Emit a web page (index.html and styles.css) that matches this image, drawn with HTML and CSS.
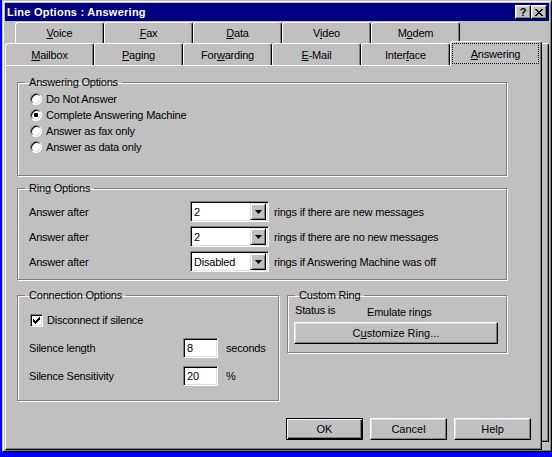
FILE: index.html
```html
<!DOCTYPE html>
<html lang="en">
<head>
    <meta charset="UTF-8">
    <title>Line Options : Answering</title>
    <link rel="stylesheet" href="styles.css">
</head>
<body>
    <div class="window">
        <div class="titlebar">
            <span class="title">Line Options : Answering</span>
            <div class="caption-buttons">
                <span class="caption-btn">?</span>
                <span class="caption-btn">
                    <svg width="8" height="7" viewBox="0 0 8 7" shape-rendering="crispEdges"><path d="M0 0h2v1h-2zM6 0h2v1h-2zM1 1h2v1h-2zM5 1h2v1h-2zM2 2h4v1h-4zM3 3h2v1h-2zM2 4h4v1h-4zM1 5h2v1h-2zM5 5h2v1h-2zM0 6h2v1h-2zM6 6h2v1h-2z"/></svg>
                </span>
            </div>
        </div>

        <div class="content">
            <div class="notebook">
                <div class="tab-row back">
                    <div class="tab"><span><u>V</u>oice</span></div>
                    <div class="tab"><span><u>F</u>ax</span></div>
                    <div class="tab"><span><u>D</u>ata</span></div>
                    <div class="tab"><span>V<u>i</u>deo</span></div>
                    <div class="tab"><span>M<u>o</u>dem</span></div>
                </div>
                <div class="tab-row front">
                    <div class="tab"><span><u>M</u>ailbox</span></div>
                    <div class="tab"><span><u>P</u>aging</span></div>
                    <div class="tab"><span>For<u>w</u>arding</span></div>
                    <div class="tab"><span><u>E</u>-Mail</span></div>
                    <div class="tab"><span>Inter<u>f</u>ace</span></div>
                    <div class="tab selected"><span class="focus"><u>A</u>nswering</span></div>
                </div>

                <div class="panel">
                    <fieldset class="group wide answering">
                        <legend>Answering Options</legend>
                        <div class="group-body">
                            <div class="radio-row"><span class="radio"></span>Do Not Answer</div>
                            <div class="radio-row"><span class="radio checked"></span>Complete Answering Machine</div>
                            <div class="radio-row"><span class="radio"></span>Answer as fax only</div>
                            <div class="radio-row"><span class="radio"></span>Answer as data only</div>
                        </div>
                    </fieldset>

                    <fieldset class="group wide ring">
                        <legend>Ring Options</legend>
                        <div class="group-body">
                            <div class="ring-row">
                                <span class="ring-label">Answer after</span>
                                <div class="combo"><span class="combo-value">2</span><span class="combo-btn"><svg width="7" height="4" viewBox="0 0 7 4"><polygon points="0,0 7,0 3.5,4"/></svg></span></div>
                                <span>rings if there are new messages</span>
                            </div>
                            <div class="ring-row">
                                <span class="ring-label">Answer after</span>
                                <div class="combo"><span class="combo-value">2</span><span class="combo-btn"><svg width="7" height="4" viewBox="0 0 7 4"><polygon points="0,0 7,0 3.5,4"/></svg></span></div>
                                <span>rings if there are no new messages</span>
                            </div>
                            <div class="ring-row">
                                <span class="ring-label">Answer after</span>
                                <div class="combo"><span class="combo-value">Disabled</span><span class="combo-btn"><svg width="7" height="4" viewBox="0 0 7 4"><polygon points="0,0 7,0 3.5,4"/></svg></span></div>
                                <span>rings if Answering Machine was off</span>
                            </div>
                        </div>
                    </fieldset>

                    <div class="bottom-groups">
                        <fieldset class="group connection">
                            <legend>Connection Options</legend>
                            <div class="group-body">
                                <div class="check-row">
                                    <span class="checkbox">
                                        <svg width="7" height="7" viewBox="0 0 7 7" shape-rendering="crispEdges"><path d="M6 0h1v1h-1zM5 1h2v1h-2zM0 2h1v1h-1zM4 2h3v1h-3zM0 3h2v1h-2zM3 3h3v1h-3zM0 4h5v1h-5zM1 5h3v1h-3zM2 6h1v1h-1z"/></svg>
                                    </span>
                                    Disconnect if silence
                                </div>
                                <div class="field-row">
                                    <span class="field-label">Silence length</span>
                                    <span class="textbox">8</span>
                                    <span class="unit">seconds</span>
                                </div>
                                <div class="field-row second">
                                    <span class="field-label">Silence Sensitivity</span>
                                    <span class="textbox">20</span>
                                    <span class="unit">%</span>
                                </div>
                            </div>
                        </fieldset>

                        <fieldset class="group custom">
                            <legend>Custom Ring</legend>
                            <div class="group-body">
                                <div class="status-row">
                                    <span class="status-label">Status is</span>
                                    <span class="status-value">Emulate rings</span>
                                </div>
                                <button class="btn customize">C<u>u</u>stomize Ring...</button>
                            </div>
                        </fieldset>
                    </div>

                    <div class="dialog-buttons">
                        <button class="btn default">OK</button>
                        <button class="btn">Cancel</button>
                        <button class="btn">Help</button>
                    </div>
                </div>
            </div>
            <div class="back-page"></div>
        </div>
    </div>
</body>
</html>
```

FILE: styles.css
```css
* {
    box-sizing: border-box;
}
body {
    margin: 0;
    width: 552px;
    height: 457px;
    overflow: hidden;
    background-color: #0000ff; /* desktop */
    font-family: "Liberation Sans", Arial, sans-serif;
    font-size: 11px;
    letter-spacing: -0.2px;
    color: #000;
}
u {
    text-decoration-thickness: 1px;
    text-underline-offset: 1px;
}

/* window frame */
.window {
    margin-left: 2px;
    width: 550px;
    height: 452px;
    background-color: #c0c0c0;
    border: 1px solid;
    border-color: #c0c0c0 #000 #000 #c0c0c0;
    box-shadow: inset 1px 1px #fff, inset -1px -1px #808080;
    padding: 2px 2px 1px 2px;
    display: flex;
    flex-direction: column;
}
.titlebar {
    height: 18px;
    flex-shrink: 0;
    background-color: #000080;
    color: #fff;
    display: flex;
    align-items: center;
    justify-content: space-between;
    padding: 0 2px 0 2px;
}
.title {
    font-weight: bold;
    letter-spacing: 0.25px;
}
.caption-buttons {
    display: flex;
}
.caption-btn {
    width: 16px;
    height: 14px;
    background-color: #c0c0c0;
    border: 1px solid;
    border-color: #fff #000 #000 #fff;
    box-shadow: inset -1px -1px #808080, inset 1px 1px #dfdfdf;
    display: flex;
    align-items: center;
    justify-content: center;
    color: #000;
    font-weight: bold;
    font-size: 11px;
    letter-spacing: 0;
}

/* tabbed notebook */
.content {
    flex: 1;
    display: flex;
}
.notebook {
    width: 537px;
    display: flex;
    flex-direction: column;
}
.tab-row {
    display: flex;
}
.tab-row.back {
    margin: 1px 0 0 10px;
    height: 21px;
}
.tab-row.back .tab {
    width: 89px;
}
.tab-row.front {
    height: 22px;
}
.tab-row.front .tab {
    flex: 1;
    padding-top: 1px;
}
.tab {
    background-color: #c0c0c0;
    border: 1px solid;
    border-bottom: none;
    border-color: #fff #000 transparent #fff;
    border-radius: 3px 3px 0 0;
    box-shadow: inset -1px 0 #808080;
    display: flex;
    align-items: center;
    justify-content: center;
}
.tab.selected {
    position: relative;
    z-index: 1;
    margin-top: -2px;
    height: 25px;
    padding: 3px 2px 2px 1px;
    align-items: stretch;
}
.focus {
    flex: 1;
    border: 1px dotted #000;
    display: flex;
    align-items: center;
    justify-content: center;
}
.panel {
    flex: 1;
    border: 1px solid;
    border-color: #fff #000 #000 #fff;
    box-shadow: inset -1px -1px #808080;
    padding: 10px 0 0 11px;
}
.back-page {
    width: 7px;
    margin-top: 22px;
    height: 399px;
    border: 1px solid;
    border-color: #fff #000 #000 #fff;
    border-left: none;
    border-radius: 0 3px 0 0;
    box-shadow: inset -1px -1px #808080;
}

/* group boxes */
.group {
    margin: 0;
    padding: 0;
    min-width: 0;
    border: 1px solid #808080;
    box-shadow: inset 1px 1px #fff, 1px 1px #fff;
}
.group legend {
    margin-left: 7px;
    padding: 0 4px;
    line-height: 13px;
}
.group.wide {
    width: 490px;
}
.answering {
    height: 100px;
}
.answering .group-body {
    padding: 2px 0 0 12px;
}
.radio-row {
    display: flex;
    align-items: center;
    gap: 4px;
    height: 16px;
}
.radio {
    width: 12px;
    height: 12px;
    border-radius: 50%;
    background-color: #fff;
    border: 1px solid;
    border-color: #808080 #fff #fff #808080;
    box-shadow: inset 1px 1px #000, inset -1px -1px #dfdfdf;
    display: flex;
    align-items: center;
    justify-content: center;
}
.radio.checked::after {
    content: "";
    width: 4px;
    height: 4px;
    border-radius: 1px;
    background-color: #000;
}

.ring {
    margin-top: 6px;
    height: 98px;
}
.ring .group-body {
    padding: 4px 0 0 11px;
}
.ring-row {
    display: flex;
    align-items: center;
    height: 25px;
}
.ring-label {
    width: 161px;
}
.combo {
    width: 79px;
    height: 21px;
    margin-right: 5px;
    background-color: #fff;
    border: 1px solid;
    border-color: #808080 #fff #fff #808080;
    box-shadow: inset 1px 1px #000, inset -1px -1px #dfdfdf;
    padding: 2px;
    display: flex;
    align-items: center;
}
.combo-value {
    flex: 1;
    padding-left: 1px;
}
.combo-btn {
    width: 16px;
    height: 17px;
    background-color: #c0c0c0;
    border: 1px solid;
    border-color: #dfdfdf #000 #000 #dfdfdf;
    box-shadow: inset 1px 1px #fff, inset -1px -1px #808080;
    display: flex;
    align-items: center;
    justify-content: center;
}

.bottom-groups {
    display: flex;
    align-items: flex-start;
    gap: 8px;
    margin-top: 9px;
}
.connection {
    width: 262px;
    height: 112px;
}
.connection .group-body {
    padding: 10px 0 0 11px;
}
.check-row {
    display: flex;
    align-items: center;
    gap: 4px;
    height: 16px;
}
.checkbox {
    width: 13px;
    height: 13px;
    margin-left: 1px;
    background-color: #fff;
    border: 1px solid;
    border-color: #808080 #fff #fff #808080;
    box-shadow: inset 1px 1px #000, inset -1px -1px #dfdfdf;
    display: flex;
    align-items: center;
    justify-content: center;
}
.field-row {
    display: flex;
    align-items: center;
    height: 21px;
    margin-top: 9px;
}
.field-row.second {
    margin-top: 7px;
}
.field-label {
    width: 154px;
}
.textbox {
    width: 35px;
    height: 20px;
    margin-right: 8px;
    background-color: #fff;
    border: 1px solid;
    border-color: #808080 #fff #fff #808080;
    box-shadow: inset 1px 1px #000, inset -1px -1px #dfdfdf;
    padding: 0 0 0 3px;
    display: flex;
    align-items: center;
}

.custom {
    width: 220px;
    height: 64px;
}
.custom .group-body {
    padding: 2px 0 0 7px;
}
.status-row {
    display: flex;
    align-items: flex-start;
    height: 16px;
}
.status-label {
    width: 72px;
}
.status-value {
    padding-top: 2px;
}

/* buttons */
.btn {
    width: 77px;
    height: 22px;
    padding: 0;
    font: inherit;
    color: #000;
    background-color: #c0c0c0;
    border: 1px solid;
    border-color: #fff #000 #000 #fff;
    box-shadow: inset -1px -1px #808080, inset 1px 1px #dfdfdf;
}
.btn.default {
    border-color: #000;
    box-shadow: inset 1px 1px #fff, inset -1px -1px #000, inset -2px -2px #808080;
}
.btn.customize {
    width: 204px;
    margin: 2px 0 0 -1px;
}
.dialog-buttons {
    display: flex;
    justify-content: flex-end;
    gap: 7px;
    margin: 17px 10px 0 0;
}
```
